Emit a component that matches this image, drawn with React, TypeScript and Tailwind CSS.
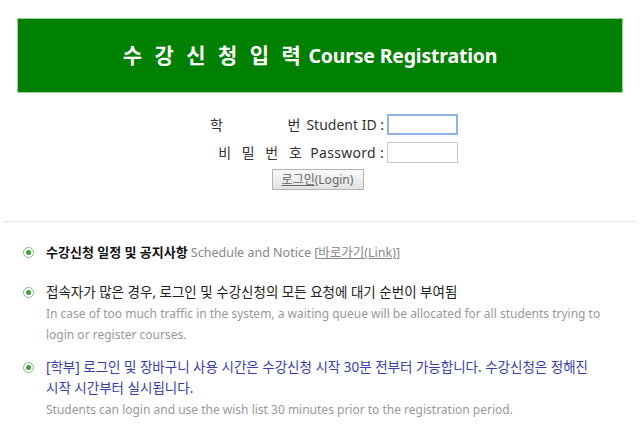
import React from 'react';

const FONT = '"Noto Sans", "Noto Sans CJK KR", sans-serif';

function Bullet() {
  return (
    <span className="mt-[5px] flex h-[11px] w-[11px] shrink-0 items-center justify-center rounded-full border-[1.5px] border-[#7cc07c]">
      <span className="h-[5px] w-[5px] rounded-full bg-[#3f9f3f]" />
    </span>
  );
}

export default function App() {
  return (
    <div className="min-h-[427px] bg-white pt-[18px]" style={{ fontFamily: FONT }}>
      <div className="mx-[17px] flex h-[75px] items-center justify-center border border-[#9ad89a] bg-[#008000]">
        <h1 className="ml-[-20px] whitespace-nowrap font-bold text-white">
          <span className="text-[21px] tracking-[3.5px]">수 강 신 청 입 력</span>
          <span className="ml-[4px] text-[19.5px] tracking-[-0.2px]">Course Registration</span>
        </h1>
      </div>

      <div className="mt-[21px] flex flex-col items-center text-[14px] text-[#333]">
        <div className="ml-[30px] flex items-center gap-[3px]">
          <label className="flex w-[172px] justify-between">
            <span className="ml-[-2px]">학</span>
            <span>
              <span className="mr-[6px]">번</span>Student ID :
            </span>
          </label>
          <input className="h-[21px] w-[71px] border-2 border-[#8fb3e6] bg-white outline-none" />
        </div>
        <div className="ml-[30px] mt-[7px] flex items-center gap-[3px]">
          <label className="flex w-[172px] justify-end whitespace-nowrap">
            <span className="tracking-[3.5px]">비 밀 번 호</span>
            <span className="ml-[5px] tracking-[0.3px]">Password :</span>
          </label>
          <input className="h-[21px] w-[71px] border border-[#c8c8c8] bg-white outline-none" />
        </div>
        <button className="ml-[-5px] mt-[6px] h-[21px] w-[92px] border border-[#b4b4b4] bg-gradient-to-b from-[#fafafa] to-[#e2e2e2] text-[12px] text-[#666]">
          <span className="underline">로그인</span>(Login)
        </button>
      </div>

      <div className="mx-[5px] mt-[31px] border-t border-dotted border-[#f0c4cc]" />

      <ul className="mt-[20px] flex flex-col pl-[23px] pr-[20px] text-[12px] leading-[21px]">
        <li className="flex gap-[12px]">
          <Bullet />
          <p>
            <span className="text-[13px] font-bold text-[#111]">수강신청 일정 및 공지사항</span>{' '}
            <span className="text-[12.5px] text-[#888]">
              Schedule and Notice [<a className="underline">바로가기(Link)</a>]
            </span>
          </p>
        </li>
        <li className="mt-[19px] flex gap-[12px]">
          <Bullet />
          <div>
            <p className="text-[13.5px] text-[#222]">접속자가 많은 경우, 로그인 및 수강신청의 모든 요청에 대기 순번이 부여됨</p>
            <p className="text-[#999]">
              In case of too much traffic in the system, a waiting queue will be allocated for all students trying to login or register courses.
            </p>
          </div>
        </li>
        <li className="mt-[12px] flex gap-[12px]">
          <Bullet />
          <div>
            <p className="pr-[30px] text-[13.5px] text-[#3b3bb0]">
              [학부] 로그인 및 장바구니 사용 시간은 수강신청 시작 30분 전부터 가능합니다. 수강신청은 정해진 시작 시간부터 실시됩니다.
            </p>
            <p className="text-[#999]">
              Students can login and use the wish list 30 minutes prior to the registration period.
            </p>
          </div>
        </li>
      </ul>
    </div>
  );
}
